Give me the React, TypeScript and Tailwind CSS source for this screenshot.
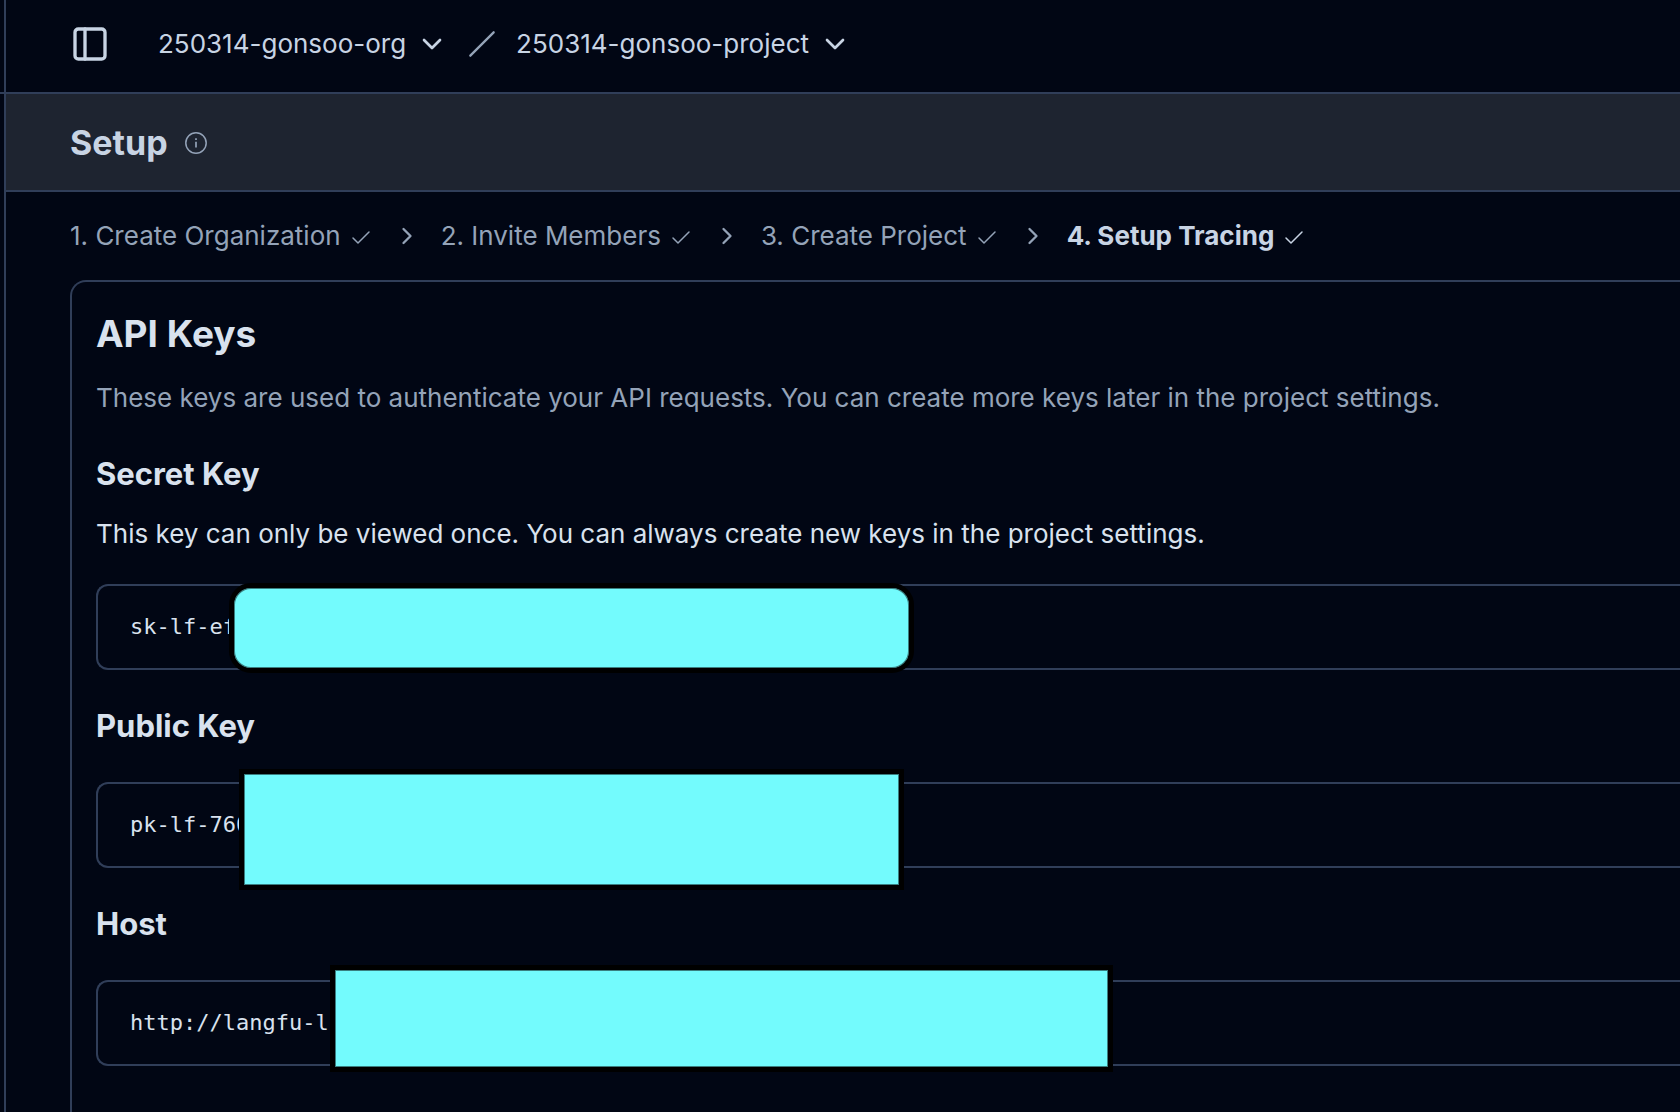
import { Check, ChevronDown, ChevronRight, PanelLeft, Slash } from "lucide-react";

type Step = { label: string; current?: boolean };

const steps: Step[] = [
  { label: "1. Create Organization" },
  { label: "2. Invite Members" },
  { label: "3. Create Project" },
  { label: "4. Setup Tracing", current: true },
];

function InfoIcon() {
  return (
    <svg width="24" height="24" viewBox="0 0 24 24" fill="none" stroke="currentColor" aria-hidden="true">
      <circle cx="12" cy="12" r="10.2" strokeWidth="1.5" />
      <path d="M12 7.2v1.8M12 10.7v5.9" strokeWidth="1.7" />
    </svg>
  );
}

function Crumb({ label }: { label: string }) {
  return (
    <button type="button" className="flex items-center gap-2.5 text-[26px] leading-9 text-[#c8d4e4]">
      {label}
      <ChevronDown size={32} />
    </button>
  );
}

function KeyBox({ value, cover }: { value: string; cover: string }) {
  return (
    <div className="relative flex h-[86px] items-center rounded-l-xl border-2 border-r-0 border-[#303e59] pl-8">
      <code className="font-['DejaVu_Sans_Mono',monospace] text-[22px] leading-8 text-[#d9e2ee]">{value}</code>
      <div
        className={`absolute border-5 border-black bg-[#73fbfd] shadow-[inset_0_0_0_1px_#3a7f80] ${cover}`}
      />
    </div>
  );
}

function KeyTitle({ children }: { children: string }) {
  return <h3 className="text-[31px] leading-10 font-bold">{children}</h3>;
}

export default function App() {
  return (
    <div className="flex min-h-screen overflow-hidden bg-[#010614] font-[Inter,sans-serif] text-[#d9e2ee]">
      <aside className="w-1.5 shrink-0 border-r-2 border-[#303e59]">
        <div className="h-[94px] border-b-2 border-[#303e59]" />
      </aside>
      <div className="flex min-w-0 flex-1 flex-col">
        <header className="flex h-[94px] items-center border-b-2 border-[#303e59] pb-1 pl-16">
          <button type="button" aria-label="Toggle sidebar" className="mr-12 text-[#c8d4e4]">
            <PanelLeft size={40} />
          </button>
          <nav aria-label="Breadcrumb" className="flex items-center gap-5">
            <Crumb label="250314-gonsoo-org" />
            <Slash size={28} className="text-[#94a3b8]" />
            <Crumb label="250314-gonsoo-project" />
          </nav>
        </header>
        <div className="flex items-center gap-4 border-b-2 border-[#303e59] bg-[#1e2430] pt-[25px] pb-[23px] pl-16">
          <h1 className="text-[34px] leading-12 font-bold text-[#c8d4e4]">Setup</h1>
          <button type="button" aria-label="About setup" className="text-[#94a3b8]">
            <InfoIcon />
          </button>
        </div>
        <main className="flex flex-1 flex-col pl-16">
          <ol className="flex items-center gap-5 py-6 text-[26px] leading-10 text-[#94a3b8]">
            {steps.map((step, i) => (
              <li key={step.label} className="flex items-center gap-5 whitespace-nowrap">
                {i > 0 && <ChevronRight size={28} />}
                <span
                  aria-current={step.current ? "step" : undefined}
                  className={step.current ? "flex items-center gap-2 font-bold text-[#c8d4e4]" : "flex items-center gap-2"}
                >
                  {step.label}
                  <Check size={24} strokeWidth={1.5} className="mt-1" />
                </span>
              </li>
            ))}
          </ol>
          <section className="flex-1 rounded-tl-2xl border-t-2 border-l-2 border-[#303e59] pt-7 pl-6">
            <h2 className="text-[37px] leading-12 font-bold">API Keys</h2>
            <p className="mt-[22px] text-[26px] leading-9 text-[#94a3b8]">
              These keys are used to authenticate your API requests. You can create more keys later in the project settings.
            </p>
            <div className="mt-[38px] flex flex-col gap-9">
              <div>
                <KeyTitle>Secret Key</KeyTitle>
                <p className="mt-[22px] mb-8 text-[26px] leading-9">
                  This key can only be viewed once. You can always create new keys in the project settings.
                </p>
                <KeyBox value="sk-lf-ef" cover="-top-[3px] left-[131px] h-[90px] w-[685px] rounded-[22px]" />
              </div>
              <div>
                <KeyTitle>Public Key</KeyTitle>
                <div className="mt-9">
                  <KeyBox value="pk-lf-760" cover="-top-[15px] left-[141px] h-[121px] w-[665px]" />
                </div>
              </div>
              <div>
                <KeyTitle>Host</KeyTitle>
                <div className="mt-9">
                  <KeyBox value="http://langfu-l" cover="-top-[17px] left-[232px] h-[107px] w-[783px]" />
                </div>
              </div>
            </div>
          </section>
        </main>
      </div>
    </div>
  );
}
